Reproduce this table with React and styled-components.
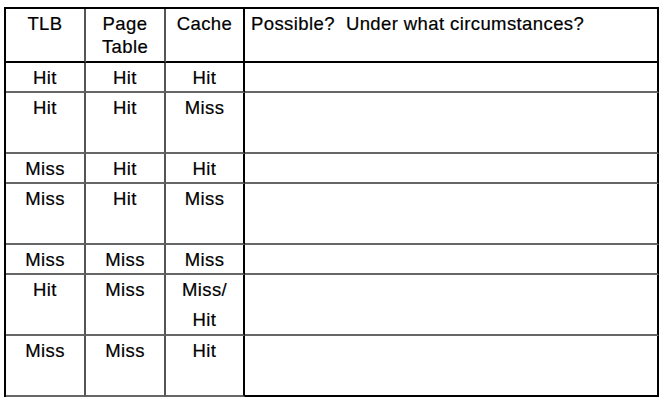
import React from "react";
import styled, { createGlobalStyle } from "styled-components";

const rows = [
  { tlb: "Hit", pt: "Hit", cache: ["Hit"], tall: false },
  { tlb: "Hit", pt: "Hit", cache: ["Miss"], tall: true },
  { tlb: "Miss", pt: "Hit", cache: ["Hit"], tall: false },
  { tlb: "Miss", pt: "Hit", cache: ["Miss"], tall: true },
  { tlb: "Miss", pt: "Miss", cache: ["Miss"], tall: false },
  { tlb: "Hit", pt: "Miss", cache: ["Miss/", "Hit"], tall: true },
  { tlb: "Miss", pt: "Miss", cache: ["Hit"], tall: true },
];

const App = () => {
  return (
    <>
      <GlobalStyle />
      <Page>
        <Grid rows={rows.map((r) => (r.tall ? "61px" : "30px")).join(" ")}>
          <HeadCell>TLB</HeadCell>
          <HeadCell>
            Page
            <br />
            Table
          </HeadCell>
          <HeadCell thick>Cache</HeadCell>
          <HeadCell left>Possible?&nbsp; Under what circumstances?</HeadCell>
          {rows.map((row, i) => (
            <React.Fragment key={i}>
              <Cell>{row.tlb}</Cell>
              <Cell>{row.pt}</Cell>
              <Cell thick>
                {row.cache.map((c, j) => (
                  <div key={j}>{c}</div>
                ))}
              </Cell>
              <Cell thick last={i === rows.length - 1} />
            </React.Fragment>
          ))}
        </Grid>
      </Page>
    </>
  );
};

export default App;

const GlobalStyle = createGlobalStyle`
  html, body {
    margin: 0;
    padding: 0;
    background: #ffffff;
  }
  body {
    font-family: "Liberation Sans", Arial, sans-serif;
    color: #000000;
  }
  * {
    box-sizing: border-box;
  }
`;

const Page = styled.div`
  width: 668px;
  height: 405px;
  padding: 7px 0 0 4px;
`;

const Grid = styled.div`
  display: grid;
  width: 655px;
  grid-template-columns: 80px 80px 79px 414px;
  grid-template-rows: 54px ${(p) => p.rows};
  border-left: 2px solid #000;
  border-top: 2px solid #000;
`;

const HeadCell = styled.div`
  font-size: 18.5px;
  letter-spacing: 0.4px;
  line-height: 22.7px;
  padding: 4px ${(p) => (p.left ? "6px" : "0")} 0;
  text-align: ${(p) => (p.left ? "left" : "center")};
  border-bottom: 2px solid #000;
  border-right: 2px solid ${(p) => (p.thick || p.left ? "#000" : "#555")};
  white-space: nowrap;
  -webkit-text-stroke: 0.2px #000;
`;

const Cell = styled.div`
  font-size: 18.5px;
  letter-spacing: 0.4px;
  line-height: 30px;
  text-align: center;
  border-bottom: 2px solid ${(p) => (p.last ? "#000" : "#666")};
  border-right: 2px solid ${(p) => (p.thick ? "#000" : "#555")};
  -webkit-text-stroke: 0.2px #000;
`;
